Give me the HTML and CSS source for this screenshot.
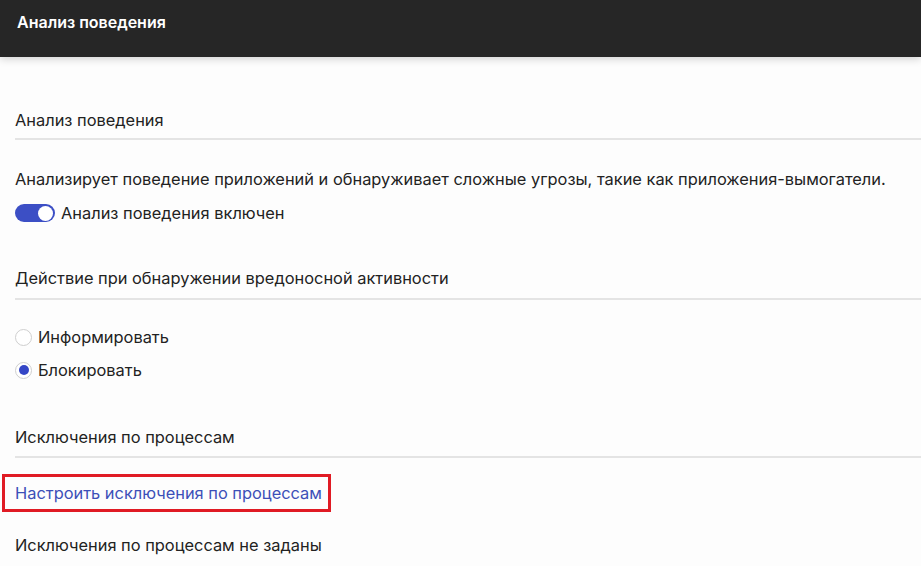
FILE: index.html
```html
<!DOCTYPE html>
<html lang="ru">
<head>
  <meta charset="UTF-8" />
  <meta name="viewport" content="width=device-width, initial-scale=1.0" />
  <title>Анализ поведения</title>
  <link rel="stylesheet" href="styles.css">
</head>
<body>
  <header class="topbar">Анализ поведения</header>

  <main class="content">
    <h2 class="section-title">Анализ поведения</h2>
    <p class="desc">Анализирует поведение приложений и обнаруживает сложные угрозы, такие как приложения-вымогатели.</p>
    <label class="toggle-row">
      <span class="toggle"><span class="knob"></span></span>
      Анализ поведения включен
    </label>

    <h2 class="section-title second">Действие при обнаружении вредоносной активности</h2>
    <div class="radios">
      <label class="radio-row"><span class="radio"></span>Информировать</label>
      <label class="radio-row"><span class="radio checked"></span>Блокировать</label>
    </div>

    <h2 class="section-title third">Исключения по процессам</h2>
    <div class="link-box">
      <a href="#" class="link">Настроить исключения по процессам</a>
    </div>
    <p class="note">Исключения по процессам не заданы</p>
  </main>
</body>
</html>
```

FILE: styles.css
```css
body {
  margin: 0;
  font-family: Inter, "Noto Sans", sans-serif;
  background: #fdfdfd;
  color: #222;
  font-size: 16.4px;
}
.topbar {
  background: #262626;
  color: #fff;
  font-weight: 600;
  font-size: 16px;
  height: 57px;
  line-height: 44px;
  padding-left: 17px;
  box-shadow: 0 2px 8px rgba(0,0,0,0.18);
}
.content {
  padding-left: 15px;
}
.section-title {
  font-size: 16.4px;
  font-weight: 400;
  margin: 0;
  padding: 53px 0 8px;
  border-bottom: 2px solid #e4e4e4;
  line-height: 20px;
}
.section-title.second {
  padding-top: 45px;
  padding-bottom: 10px;
}
.section-title.third {
  padding-top: 34px;
  padding-bottom: 9px;
}
.desc {
  margin: 29px 0 0;
  line-height: 20px;
}
.toggle-row {
  display: flex;
  align-items: center;
  gap: 6px;
  margin-top: 14px;
  line-height: 20px;
}
.toggle {
  width: 40px;
  height: 18px;
  border-radius: 9px;
  background: #3c4fc5;
  display: flex;
  align-items: center;
  justify-content: flex-end;
  padding-right: 2px;
  box-sizing: border-box;
}
.knob {
  width: 15px;
  height: 15px;
  border-radius: 50%;
  background: #fff;
}
.radios {
  margin-top: 27px;
}
.radio-row {
  display: flex;
  align-items: center;
  gap: 6px;
  line-height: 20px;
  margin-bottom: 13px;
}
.radio {
  width: 17px;
  height: 17px;
  border-radius: 50%;
  border: 1px solid #cfcfcf;
  box-sizing: border-box;
  background: #fff;
  position: relative;
}
.radio.checked::after {
  content: "";
  position: absolute;
  left: 2.5px;
  top: 2.5px;
  width: 10px;
  height: 10px;
  border-radius: 50%;
  background: #3446c6;
}
.link-box {
  margin: 16px 0 0 -13px;
  width: 313px;
  height: 32px;
  border: 3px solid #e01b24;
  padding-left: 10px;
  line-height: 32px;
}
.link {
  color: #3c4fb8;
  text-decoration: none;
}
.note {
  margin: 23px 0 0;
  line-height: 20px;
}
```
